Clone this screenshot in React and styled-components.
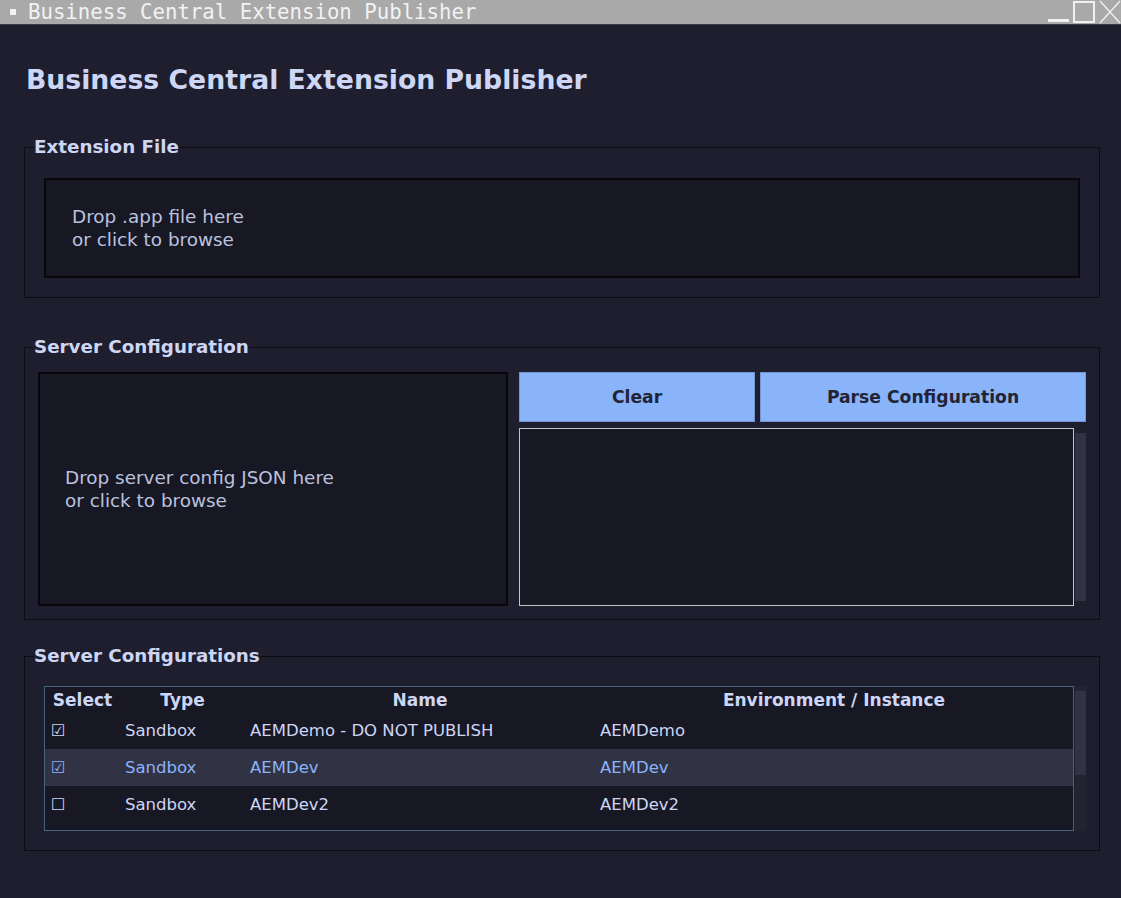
import styled, { createGlobalStyle } from "styled-components";

const GlobalStyle = createGlobalStyle`
  * {
    box-sizing: border-box;
  }
  body {
    margin: 0;
    background: #1e1e2e;
    font-family: "DejaVu Sans", sans-serif;
  }
`;

const servers = [
  { checked: true, type: "Sandbox", name: "AEMDemo - DO NOT PUBLISH", env: "AEMDemo" },
  { checked: true, type: "Sandbox", name: "AEMDev", env: "AEMDev", selected: true },
  { checked: false, type: "Sandbox", name: "AEMDev2", env: "AEMDev2" },
];

const App = () => {
  return (
    <Window>
      <GlobalStyle />
      <TitleBar>
        <TitleBullet />
        <TitleText>Business Central Extension Publisher</TitleText>
        <WindowButtons>
          <svg width="22" height="25" viewBox="0 0 22 25">
            <rect x="1" y="19" width="21" height="3" fill="#f2f2f2" />
          </svg>
          <svg width="22" height="25" viewBox="0 0 22 25">
            <rect x="1" y="2" width="20" height="20" fill="none" stroke="#f2f2f2" strokeWidth="2" />
          </svg>
          <svg width="22" height="25" viewBox="0 0 22 25">
            <path d="M1 1 L21 23 M21 1 L1 23" stroke="#f2f2f2" strokeWidth="1.2" />
          </svg>
        </WindowButtons>
      </TitleBar>

      <Main>
        <Heading>Business Central Extension Publisher</Heading>

        <Frame $pad="21px 19px 19px 19px">
          <FrameLabel $shift="-10px">Extension File</FrameLabel>
          <DropZone $height="100px" $indent="26px">
            Drop .app file here
            <br />
            or click to browse
          </DropZone>
        </Frame>

        <Frame $pad="15px 13px 13px 13px" $gap="39px">
          <FrameLabel $shift="-4px">Server Configuration</FrameLabel>
          <ConfigGrid>
            <DropZone $height="234px" $indent="25px">
              Drop server config JSON here
              <br />
              or click to browse
            </DropZone>
            <ConfigSide>
              <ButtonRow>
                <ActionButton>Clear</ActionButton>
                <ActionButton>Parse Configuration</ActionButton>
              </ButtonRow>
              <TextPane>
                <TextArea />
                <ScrollTrack $trough="#1e1e2e">
                  <ScrollThumb $size="100%" />
                </ScrollTrack>
              </TextPane>
            </ConfigSide>
          </ConfigGrid>
        </Frame>

        <Frame $pad="20px 13px 19px 19px" $gap="26px">
          <FrameLabel $shift="-10px">Server Configurations</FrameLabel>
          <TreePane>
            <Tree>
              <TreeHeader>
                <HeadCell>Select</HeadCell>
                <HeadCell>Type</HeadCell>
                <HeadCell>Name</HeadCell>
                <HeadCell>Environment / Instance</HeadCell>
              </TreeHeader>
              {servers.map((s) => (
                <TreeRow key={s.name} $selected={s.selected}>
                  <CheckCell>{s.checked ? "☑" : "☐"}</CheckCell>
                  <Cell>{s.type}</Cell>
                  <Cell>{s.name}</Cell>
                  <Cell>{s.env}</Cell>
                </TreeRow>
              ))}
            </Tree>
            <ScrollTrack $trough="#232332">
              <ScrollThumb $size="84px" />
            </ScrollTrack>
          </TreePane>
        </Frame>
      </Main>
    </Window>
  );
};

const Window = styled.div`
  width: 1121px;
  height: 898px;
  background: #1e1e2e;
  overflow: hidden;
`;

const TitleBar = styled.div`
  display: flex;
  align-items: center;
  height: 25px;
  background: #a9a9a9;
  border-bottom: 1px solid #3b3b44;
`;

const TitleBullet = styled.span`
  width: 6px;
  height: 6px;
  margin: 0 12px 0 10px;
  background: #f2f2f2;
`;

const TitleText = styled.span`
  font-family: "DejaVu Sans Mono", monospace;
  font-size: 20.7px;
  line-height: 24px;
  color: #f2f2f2;
  white-space: nowrap;
`;

const WindowButtons = styled.div`
  display: flex;
  gap: 4px;
  margin-left: auto;
  align-self: stretch;
  align-items: center;
`;

const Main = styled.div`
  padding: 39px 21px 0 24px;
`;

const Heading = styled.h1`
  margin: 0 0 41px 2px;
  font-size: 26.7px;
  line-height: 32px;
  font-weight: bold;
  color: #cdd6f4;
`;

const Frame = styled.fieldset`
  margin: ${(p) => p.$gap || "0"} 0 0 0;
  padding: ${(p) => p.$pad};
  border: 1px solid #0c0c13;
  min-width: 0;
`;

const FrameLabel = styled.legend`
  margin-left: ${(p) => p.$shift};
  padding: 0;
  font-size: 18.3px;
  line-height: 20px;
  font-weight: bold;
  color: #cdd6f4;
`;

const DropZone = styled.div`
  display: flex;
  align-items: center;
  height: ${(p) => p.$height};
  padding-left: ${(p) => p.$indent};
  background: #181825;
  border: 2px solid #08080c;
  font-size: 18.4px;
  line-height: 23px;
  color: #bac2de;
`;

const ConfigGrid = styled.div`
  display: grid;
  grid-template-columns: 470px 1fr;
  gap: 11px;
`;

const ConfigSide = styled.div`
  display: flex;
  flex-direction: column;
  gap: 6px;
`;

const ButtonRow = styled.div`
  display: grid;
  grid-template-columns: 236px 1fr;
  gap: 5px;
`;

const ActionButton = styled.button`
  height: 50px;
  background: #89b4fa;
  border: 1px solid #7396d2;
  font-family: "DejaVu Sans", sans-serif;
  font-size: 17.2px;
  font-weight: bold;
  color: #232336;
`;

const TextPane = styled.div`
  display: flex;
  gap: 1px;
  flex: 1;
`;

const TextArea = styled.div`
  flex: 1;
  background: #181825;
  border: 1px solid #c4c4c4;
`;

const ScrollTrack = styled.div`
  display: flex;
  flex-direction: column;
  width: 11px;
  padding: 5px 0 5px;
  background: ${(p) => p.$trough || "#313244"};
`;

const ScrollThumb = styled.div`
  height: ${(p) => p.$size};
  background: #313244;
`;

const TreePane = styled.div`
  display: flex;
  gap: 1px;
`;

const Tree = styled.div`
  flex: 1;
  height: 145px;
  background: #181825;
  border: 1px solid #44647f;
`;

const columns = "75px 125px 350px 1fr";

const TreeHeader = styled.div`
  display: grid;
  grid-template-columns: ${columns};
  height: 25px;
  align-items: center;
`;

const HeadCell = styled.div`
  text-align: center;
  font-size: 17px;
  font-weight: bold;
  color: #cdd6f4;
`;

const TreeRow = styled.div`
  display: grid;
  grid-template-columns: ${columns};
  height: 37px;
  align-items: center;
  background: ${(p) => (p.$selected ? "#313244" : "#181825")};
  color: ${(p) => (p.$selected ? "#89b4fa" : "#cdd6f4")};
  font-size: 16.5px;
`;

const Cell = styled.div`
  padding-left: 5px;
  white-space: nowrap;
`;

const CheckCell = styled.div`
  padding-left: 6px;
  font-size: 16px;
`;

export default App;
